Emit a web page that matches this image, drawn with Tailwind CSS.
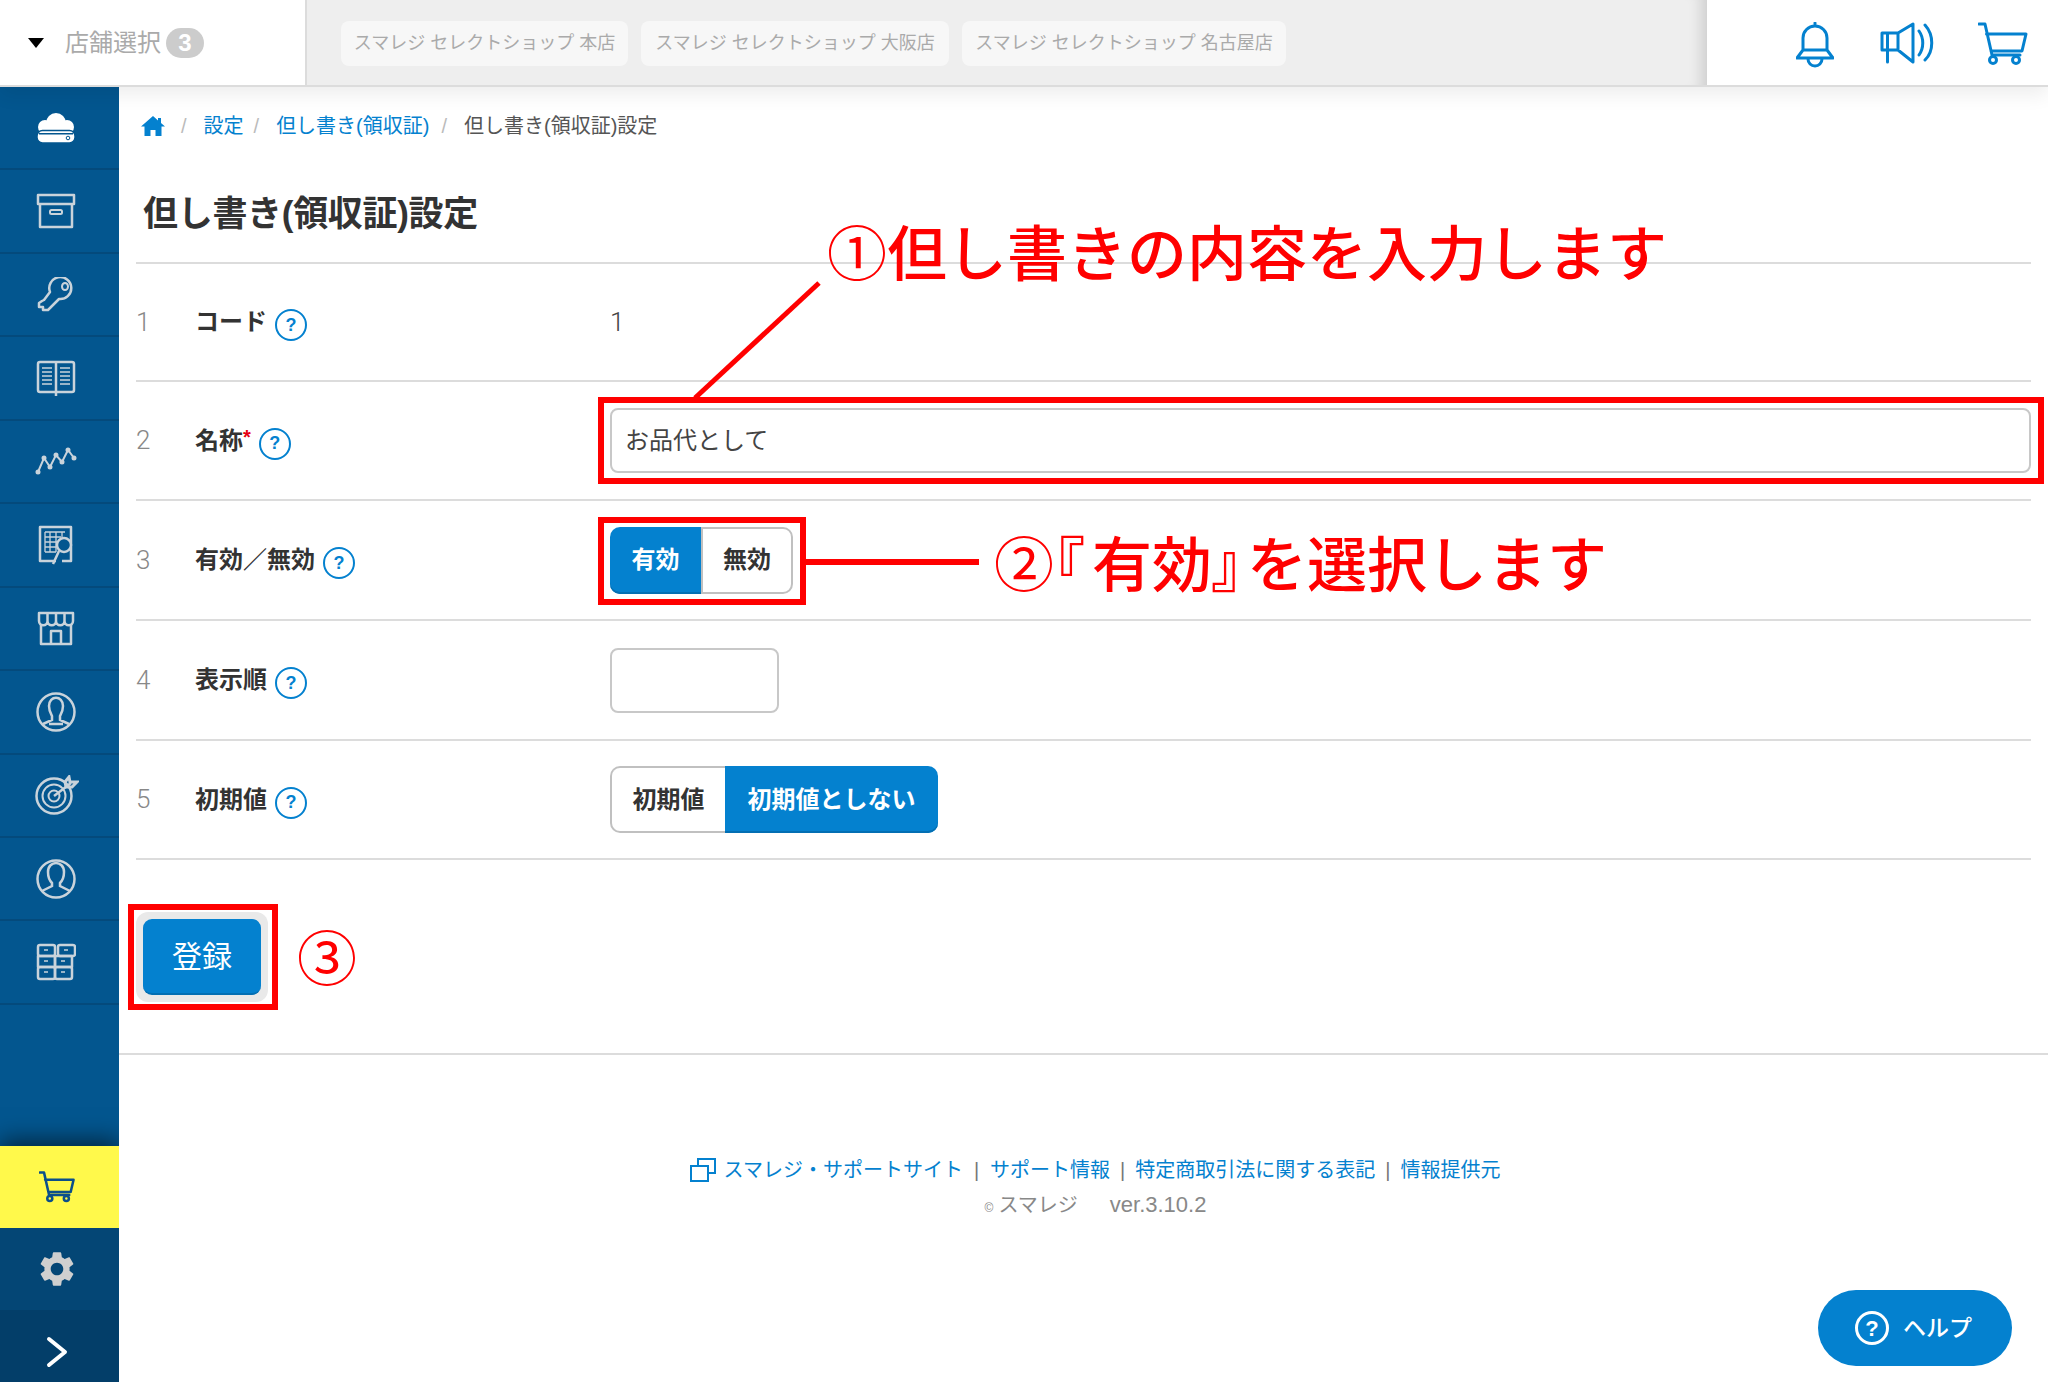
<!DOCTYPE html>
<html>
<head>
  <meta charset="utf-8">
  <title>但し書き(領収証)設定</title>
  <script src="https://cdn.jsdelivr.net/npm/@tailwindcss/browser@4"></script>
</head>
<body class="bg-white font-['Liberation_Sans','Noto_Sans_CJK_JP',sans-serif] text-[#333]">
<div class="relative w-[2048px] h-[1382px] overflow-hidden flex flex-col">

  <!-- top bar -->
  <header class="relative z-20 h-[87px] shrink-0 flex border-b-2 border-[#dcdcdc] shadow-[0_8px_18px_rgba(0,0,0,0.07)]">
    <div class="w-[307px] bg-white border-r-2 border-[#dcdcdc] flex items-center pl-[28px]">
      <span class="w-0 h-0 border-x-[8px] border-x-transparent border-t-[10px] border-t-black"></span>
      <span class="ml-[21px] text-[24px] text-[#aaa]">店舗選択</span>
      <span class="ml-[5px] w-[38px] h-[30px] rounded-full bg-[#ccc] text-white font-bold text-[24px] flex items-center justify-center">3</span>
    </div>
    <div class="w-[1400px] bg-[#eeeeee] flex items-start pt-[21px] pl-[34px] gap-[13px] shadow-[inset_-18px_0_14px_-12px_rgba(0,0,0,0.13)]">
      <div class="w-[287px] h-[45px] rounded-[8px] bg-[#f7f7f7] text-[18px] text-[#aaa] flex items-center justify-center whitespace-nowrap">スマレジ セレクトショップ 本店</div>
      <div class="w-[308px] h-[45px] rounded-[8px] bg-[#f7f7f7] text-[18px] text-[#aaa] flex items-center justify-center whitespace-nowrap">スマレジ セレクトショップ 大阪店</div>
      <div class="w-[324px] h-[45px] rounded-[8px] bg-[#f7f7f7] text-[18px] text-[#aaa] flex items-center justify-center whitespace-nowrap">スマレジ セレクトショップ 名古屋店</div>
    </div>
    <div class="flex-1 bg-white flex items-start pt-[22px] pl-[89px]">
      <svg class="w-[38px] h-[46px]" viewBox="0 0 38 46" fill="none" stroke="#0481cf" stroke-width="3" stroke-linejoin="round" stroke-linecap="round"><path d="M19 1v2M7 28V16a12 12 0 0 1 24 0v12M7 28h24l6 8H1zM12 37a7 7 0 0 0 14 0"/></svg>
      <svg class="ml-[46px] w-[56px] h-[42px]" viewBox="0 0 56 42" fill="none" stroke="#0481cf" stroke-width="3" stroke-linejoin="round" stroke-linecap="round"><path d="M2 11h16L33 2v38L18 28H2zM7.500 11v29M18 11v17M39 9c5 7 5 17 0 24M45 3c9 10 9 26 0 35"/></svg>
      <svg class="ml-[42px] w-[50px] h-[44px]" viewBox="0 0 50 44" fill="none" stroke="#0481cf" stroke-width="3" stroke-linejoin="round" stroke-linecap="round"><path d="M1 2h6l7 31h28M8.500 12H48l-4 17H13"/><circle cx="15" cy="38" r="3.500"/><circle cx="38" cy="38" r="3.500"/></svg>
    </div>
  </header>

  <div class="flex-1 flex min-h-0">
    <!-- side menu -->
    <nav class="w-[119px] shrink-0 bg-[#03568f] flex flex-col overflow-hidden">
      <div class="h-[83.45px] shrink-0 border-b-2 border-[#044a7c] pr-[7px] flex items-center justify-center">
        <svg class="w-[40px] h-[30px]" viewBox="0 0 40 30" fill="#fff"><circle cx="20" cy="10" r="10"/><circle cx="9" cy="14" r="7"/><circle cx="31" cy="14" r="7"/><rect x="6" y="10" width="28" height="11"/><rect x="1" y="17.500" width="38" height="12.500" rx="5.500" stroke="#03568f" stroke-width="1.500"/><rect x="3" y="20" width="34" height="1.500" fill="#03568f"/><circle cx="32" cy="25" r="1.800" fill="none" stroke="#03568f"/></svg>
      </div>
      <div class="h-[83.45px] shrink-0 border-b-2 border-[#044a7c] pr-[7px] flex items-center justify-center">
        <svg class="w-[40px] h-[36px]" viewBox="0 0 40 36" fill="none" stroke="#c9d3db" stroke-width="2.500" stroke-linejoin="round"><rect x="2" y="2" width="36" height="9"/><path d="M4 11v23h32V11"/><rect x="14" y="17" width="12" height="4" rx="1.500" stroke-width="2"/></svg>
      </div>
      <div class="h-[83.45px] shrink-0 border-b-2 border-[#044a7c] pr-[7px] flex items-center justify-center">
        <svg class="w-[40px] h-[36px]" viewBox="0 0 40 36" fill="none" stroke="#c9d3db" stroke-width="2.500" stroke-linejoin="round"><path d="M23 22 12 33H7v-3H3v-4l3-2 2-1 6-8a11 11 0 1 1 9 7z"/><ellipse cx="29" cy="9.500" rx="3" ry="3.500" stroke-width="2"/></svg>
      </div>
      <div class="h-[83.45px] shrink-0 border-b-2 border-[#044a7c] pr-[7px] flex items-center justify-center">
        <svg class="w-[40px] h-[37px]" viewBox="0 0 40 37" fill="none" stroke="#c9d3db" stroke-width="2.500" stroke-linejoin="round"><rect x="2" y="2" width="36" height="30" rx="2"/><path d="M20 2v34"/><path stroke-width="1.500" d="M6 8h10M6 12h10M6 16h10M6 20h10M6 24h10M24 8h10M24 12h10M24 16h10M24 20h10M24 24h10"/></svg>
      </div>
      <div class="h-[83.45px] shrink-0 border-b-2 border-[#044a7c] pr-[7px] flex items-center justify-center">
        <svg class="w-[42px] h-[28px]" viewBox="0 0 42 28" fill="#c9d3db" stroke="#c9d3db" stroke-width="2"><path fill="none" d="M3 25 9 11l6 9 6-12 6 7 6-12 6 8"/><circle cx="3" cy="25" r="1.500"/><circle cx="9" cy="11" r="1.500"/><circle cx="15" cy="20" r="1.500"/><circle cx="21" cy="8" r="1.500"/><circle cx="27" cy="15" r="1.500"/><circle cx="33" cy="3" r="1.500"/><circle cx="39" cy="11" r="1.500"/></svg>
      </div>
      <div class="h-[83.45px] shrink-0 border-b-2 border-[#044a7c] pr-[7px] flex items-center justify-center">
        <svg class="w-[36px] h-[40px]" viewBox="0 0 36 40" fill="none" stroke="#c9d3db" stroke-width="2.500" stroke-linejoin="round"><path d="M24 36h9V2H2v34h16"/><path stroke-width="1.300" d="M7 7h20M7 12h16M7 17h12M7 22h11M7 27h11M7 7v20M12 7v20M18 7v20M24 7v5"/><circle cx="26" cy="20" r="7" fill="#03568f"/><path d="m21 26-6 13"/></svg>
      </div>
      <div class="h-[83.45px] shrink-0 border-b-2 border-[#044a7c] pr-[7px] flex items-center justify-center">
        <svg class="w-[38px] h-[35px]" viewBox="0 0 38 35" fill="none" stroke="#c9d3db" stroke-width="2.500" stroke-linejoin="round"><path d="M2 2h34v8a4 4 0 0 1-8.500 0 4 4 0 0 1-8.500 0 4 4 0 0 1-8.500 0A4 4 0 0 1 2 10zM10.500 2v8M19 2v8M27.500 2v8"/><path d="M4 14v19h30V14M14 33V20h10v13"/></svg>
      </div>
      <div class="h-[83.45px] shrink-0 border-b-2 border-[#044a7c] pr-[7px] flex items-center justify-center">
        <svg class="w-[40px] h-[40px]" viewBox="0 0 40 40" fill="none" stroke="#c9d3db" stroke-width="2.500"><circle cx="20" cy="20" r="18.500"/><path d="M13 14c0-11 14-11 14 0 0 5-2 8-3 10v4l9 4M13 14c0 5 2 8 3 10v4l-9 4M13 32h14"/></svg>
      </div>
      <div class="h-[83.45px] shrink-0 border-b-2 border-[#044a7c] pr-[5px] flex items-center justify-center">
        <svg class="w-[44px] h-[40px]" viewBox="0 0 44 40" fill="none" stroke="#c9d3db" stroke-width="2.500"><circle cx="19" cy="21" r="17.500"/><circle cx="19" cy="21" r="11.500" stroke-width="2"/><circle cx="19" cy="21" r="5.500" stroke-width="2"/><path d="m19 21 17-13"/><path stroke-width="3" d="m30 7 4-5 1 5 7 0-5 5-6 0z"/></svg>
      </div>
      <div class="h-[83.45px] shrink-0 border-b-2 border-[#044a7c] pr-[7px] flex items-center justify-center">
        <svg class="w-[40px] h-[40px]" viewBox="0 0 40 40" fill="none" stroke="#c9d3db" stroke-width="2.500"><circle cx="20" cy="20" r="18.500"/><path d="M12 13c0-12 16-12 16 0 0 5-2 9-4 11v3l10 5M12 13c0 5 2 9 4 11v3L6 32"/></svg>
      </div>
      <div class="h-[83.45px] shrink-0 border-b-2 border-[#044a7c] pr-[7px] flex items-center justify-center">
        <svg class="w-[40px] h-[38px]" viewBox="0 0 40 38" fill="none" stroke="#c9d3db" stroke-width="2.500" stroke-linejoin="round"><rect x="2" y="2" width="17" height="11" rx="2"/><rect x="22" y="2" width="17" height="11" rx="2"/><rect x="2" y="13" width="17" height="11"/><rect x="19" y="13" width="17" height="11"/><rect x="2" y="24" width="17" height="12" rx="2"/><rect x="19" y="24" width="17" height="12" rx="2"/><path stroke-width="1.500" d="M8 7h4M28 7h4M8 18h4M25 18h4M8 29h4M25 29h4"/></svg>
      </div>
      <div class="flex-1"></div>
      <div class="h-[82px] shrink-0 bg-[#fff94b] pr-[6px] flex items-center justify-center shadow-[0_-6px_22px_rgba(0,0,0,0.55)]">
        <svg class="w-[36px] h-[32px]" viewBox="0 0 50 44" fill="none" stroke="#0b4f8a" stroke-width="3.500" stroke-linejoin="round" stroke-linecap="round"><path d="M1 2h6l7 31h28M8.500 12H48l-4 17H13"/><circle cx="15" cy="38" r="3.500"/><circle cx="38" cy="38" r="3.500"/></svg>
      </div>
      <div class="h-[82px] shrink-0 bg-[#044675] pr-[6px] flex items-center justify-center">
        <svg class="w-[42px] h-[42px]" viewBox="0 0 24 24" fill="#cfcfcf"><path d="M19.140 12.940c.04-.3.06-.61.06-.94 0-.32-.02-.64-.07-.94l2.030-1.580c.18-.14.23-.41.12-.61l-1.920-3.320c-.12-.22-.37-.29-.59-.22l-2.390.96c-.5-.38-1.030-.7-1.620-.94l-.36-2.540c-.04-.24-.24-.41-.48-.41h-3.840c-.24 0-.43.17-.47.41l-.36 2.540c-.59.24-1.130.57-1.620.94l-2.390-.96c-.22-.08-.47 0-.59.22L2.740 8.870c-.12.21-.08.47.12.61l2.030 1.580c-.05.3-.09.63-.09.94s.02.64.07.94l-2.030 1.580c-.18.14-.23.41-.12.61l1.920 3.320c.12.22.37.29.59.22l2.390-.96c.5.38 1.030.7 1.620.94l.36 2.540c.05.24.24.41.48.41h3.840c.24 0 .44-.17.47-.41l.36-2.540c.59-.24 1.130-.56 1.620-.94l2.390.96c.22.08.47 0 .59-.22l1.920-3.320c.12-.22.07-.47-.12-.61l-2.010-1.580zM12 15.600c-1.980 0-3.600-1.620-3.600-3.600s1.620-3.600 3.600-3.600 3.600 1.620 3.600 3.600-1.620 3.600-3.600 3.600z"/></svg>
      </div>
      <div class="h-[72px] shrink-0 bg-[#033e69] pr-[6px] pt-[11px] flex items-center justify-center">
        <svg class="w-[22px] h-[32px]" viewBox="0 0 22 32" fill="none" stroke="#fff" stroke-width="4" stroke-linecap="round" stroke-linejoin="round"><path d="m3 3 16 13L3 29"/></svg>
      </div>
    </nav>

    <!-- content -->
    <main class="flex-1 min-w-0 flex flex-col">
      <div class="pl-[22px] pt-[23px] h-[54px] flex items-center text-[20px] whitespace-nowrap">
        <svg class="w-[24px] h-[20px]" viewBox="0 0 24 20" fill="#0481cf"><path d="M12 0 0 10.500h3.500V20h6v-6h5v6h6v-9.500H24l-4-3.500V2h-3v2.400z"/></svg>
        <span class="ml-[16px] text-[#bbb]">/</span>
        <span class="ml-[17px] text-[#0481cf]">設定</span>
        <span class="ml-[10px] text-[#bbb]">/</span>
        <span class="ml-[17px] text-[#0481cf]">但し書き(領収証)</span>
        <span class="ml-[12px] text-[#bbb]">/</span>
        <span class="ml-[17px] text-[#555]">但し書き(領収証)設定</span>
      </div>
      <h1 class="mt-[50px] ml-[24px] h-[46px] text-[35px] tracking-[-0.3px] leading-[46px] font-bold text-[#333]">但し書き(領収証)設定</h1>

      <div class="mt-[25px] ml-[17px] w-[1895px] border-t-2 border-[#dcdcdc]">
        <div class="h-[118px] grid grid-cols-[59px_415px_1fr] items-center border-b-2 border-[#dcdcdc]">
          <span class="font-['Roboto'] text-[26px] font-light text-[#888]">1</span>
          <div class="flex items-center font-bold text-[24px]">コード<span class="ml-[8px] mt-[6px] w-[32px] h-[32px] rounded-full border-2 border-[#0481cf] text-[#0481cf] text-[18px] flex items-center justify-center">?</span></div>
          <span class="font-['Roboto'] text-[26px] font-light text-[#444]">1</span>
        </div>
        <div class="h-[119px] grid grid-cols-[59px_415px_1fr] items-center border-b-2 border-[#dcdcdc]">
          <span class="font-['Roboto'] text-[26px] font-light text-[#888]">2</span>
          <div class="flex items-center font-bold text-[24px]">名称<span class="text-[#e60012] text-[20px] self-start">*</span><span class="ml-[8px] mt-[6px] w-[32px] h-[32px] rounded-full border-2 border-[#0481cf] text-[#0481cf] text-[18px] flex items-center justify-center">?</span></div>
          <div class="h-[65px] rounded-[8px] border-2 border-[#c8c8c8] pl-[13px] flex items-center text-[24px] text-[#444]">お品代として</div>
        </div>
        <div class="h-[120px] grid grid-cols-[59px_415px_1fr] items-center border-b-2 border-[#dcdcdc]">
          <span class="font-['Roboto'] text-[26px] font-light text-[#888]">3</span>
          <div class="flex items-center font-bold text-[24px]">有効／無効<span class="ml-[8px] mt-[6px] w-[32px] h-[32px] rounded-full border-2 border-[#0481cf] text-[#0481cf] text-[18px] flex items-center justify-center">?</span></div>
          <div class="flex h-[67px] w-[183px] text-[24px] font-bold">
            <span class="w-[91px] rounded-l-[10px] bg-[#0481cf] text-white flex items-center justify-center shadow-[inset_0_-2px_0_#036fb3]">有効</span>
            <span class="flex-1 rounded-r-[10px] border-2 border-[#c0c0c0] flex items-center justify-center">無効</span>
          </div>
        </div>
        <div class="h-[120px] grid grid-cols-[59px_415px_1fr] items-center border-b-2 border-[#dcdcdc]">
          <span class="font-['Roboto'] text-[26px] font-light text-[#888]">4</span>
          <div class="flex items-center font-bold text-[24px]">表示順<span class="ml-[8px] mt-[6px] w-[32px] h-[32px] rounded-full border-2 border-[#0481cf] text-[#0481cf] text-[18px] flex items-center justify-center">?</span></div>
          <div class="h-[65px] w-[169px] rounded-[8px] border-2 border-[#c8c8c8]"></div>
        </div>
        <div class="h-[119px] grid grid-cols-[59px_415px_1fr] items-center border-b-2 border-[#dcdcdc]">
          <span class="font-['Roboto'] text-[26px] font-light text-[#888]">5</span>
          <div class="flex items-center font-bold text-[24px]">初期値<span class="ml-[8px] mt-[6px] w-[32px] h-[32px] rounded-full border-2 border-[#0481cf] text-[#0481cf] text-[18px] flex items-center justify-center">?</span></div>
          <div class="flex h-[67px] w-[328px] text-[24px] font-bold">
            <span class="w-[115px] rounded-l-[10px] border-2 border-r-0 border-[#c0c0c0] flex items-center justify-center">初期値</span>
            <span class="flex-1 rounded-r-[10px] bg-[#0481cf] text-white flex items-center justify-center shadow-[inset_0_-2px_0_#036fb3]">初期値としない</span>
          </div>
        </div>
      </div>

      <div class="mt-[52px] ml-[17px] w-[132px] h-[90px] rounded-[12px] bg-[#e9e9e9] p-[7px]">
        <button class="w-[118px] h-[76px] rounded-[9px] bg-[#0481cf] border-b-2 border-[#036fb3] text-white text-[30px]">登録</button>
      </div>

      <div class="mt-[51px] border-t-2 border-[#dcdcdc] pt-[100px] flex flex-col items-center text-[20px] pl-[24px]">
        <div class="flex items-center whitespace-nowrap text-[#0481cf]">
          <svg class="w-[26px] h-[24px] mr-[7px]" viewBox="0 0 26 24" fill="none" stroke="#0481cf" stroke-width="2"><path d="M8 8V1h17v14h-7"/><rect x="1" y="8" width="17" height="15"/></svg>
          <span>スマレジ・サポートサイト</span>
          <span class="mx-[11px] text-[#777]">|</span>
          <span>サポート情報</span>
          <span class="mx-[10px] text-[#777]">|</span>
          <span>特定商取引法に関する表記</span>
          <span class="mx-[10px] text-[#777]">|</span>
          <span>情報提供元</span>
        </div>
        <div class="mt-[3px] flex items-baseline text-[#888]"><span class="text-[12px] mr-[5px]">©</span><span>スマレジ</span><span class="ml-[32px] text-[22px]">ver.3.10.2</span></div>
      </div>
    </main>
  </div>

  <!-- help button -->
  <div class="absolute left-[1818px] top-[1290px] w-[194px] h-[76px] rounded-full bg-[#0481cf] flex items-center pl-[37px] text-white text-[23px] font-medium z-30">
    <span class="w-[34px] h-[34px] rounded-full border-[3px] border-white flex items-center justify-center font-bold text-[22px]">?</span>
    <span class="ml-[14px]">ヘルプ</span>
  </div>

  <!-- red annotations -->
  <div class="absolute left-[598px] top-[397px] w-[1446px] h-[87px] border-[6px] border-[#ff0000] z-30"></div>
  <div class="absolute left-[598px] top-[517px] w-[208px] h-[88px] border-[6px] border-[#ff0000] z-30"></div>
  <div class="absolute left-[128px] top-[904px] w-[150px] h-[106px] border-[6px] border-[#ff0000] z-30"></div>
  <div class="absolute left-[806px] top-[559px] w-[173px] h-[6px] bg-[#ff0000] z-30"></div>
  <svg class="absolute left-[680px] top-[270px] w-[150px] h-[130px] z-30" viewBox="0 0 150 130"><path d="M139 13 15 128" stroke="#ff0000" stroke-width="5" fill="none"/></svg>
  <div class="absolute left-[827px] top-[214px] text-[60px] leading-[84px] font-medium text-[#ff0000] whitespace-nowrap z-30"><span class="font-normal">①</span>但し書きの内容を入力します</div>
  <div class="absolute left-[994px] top-[528px] text-[60px] leading-[78px] font-medium text-[#ff0000] whitespace-nowrap z-30"><span class="font-normal">②</span><span class="mr-[8px] [font-feature-settings:'palt']">『</span>有効<span class="mr-[5px] [font-feature-settings:'palt']">』</span>を選択します</div>
  <div class="absolute left-[297px] top-[922px] text-[60px] leading-[78px] text-[#ff0000] whitespace-nowrap z-30">③</div>
</div>
</body>
</html>
